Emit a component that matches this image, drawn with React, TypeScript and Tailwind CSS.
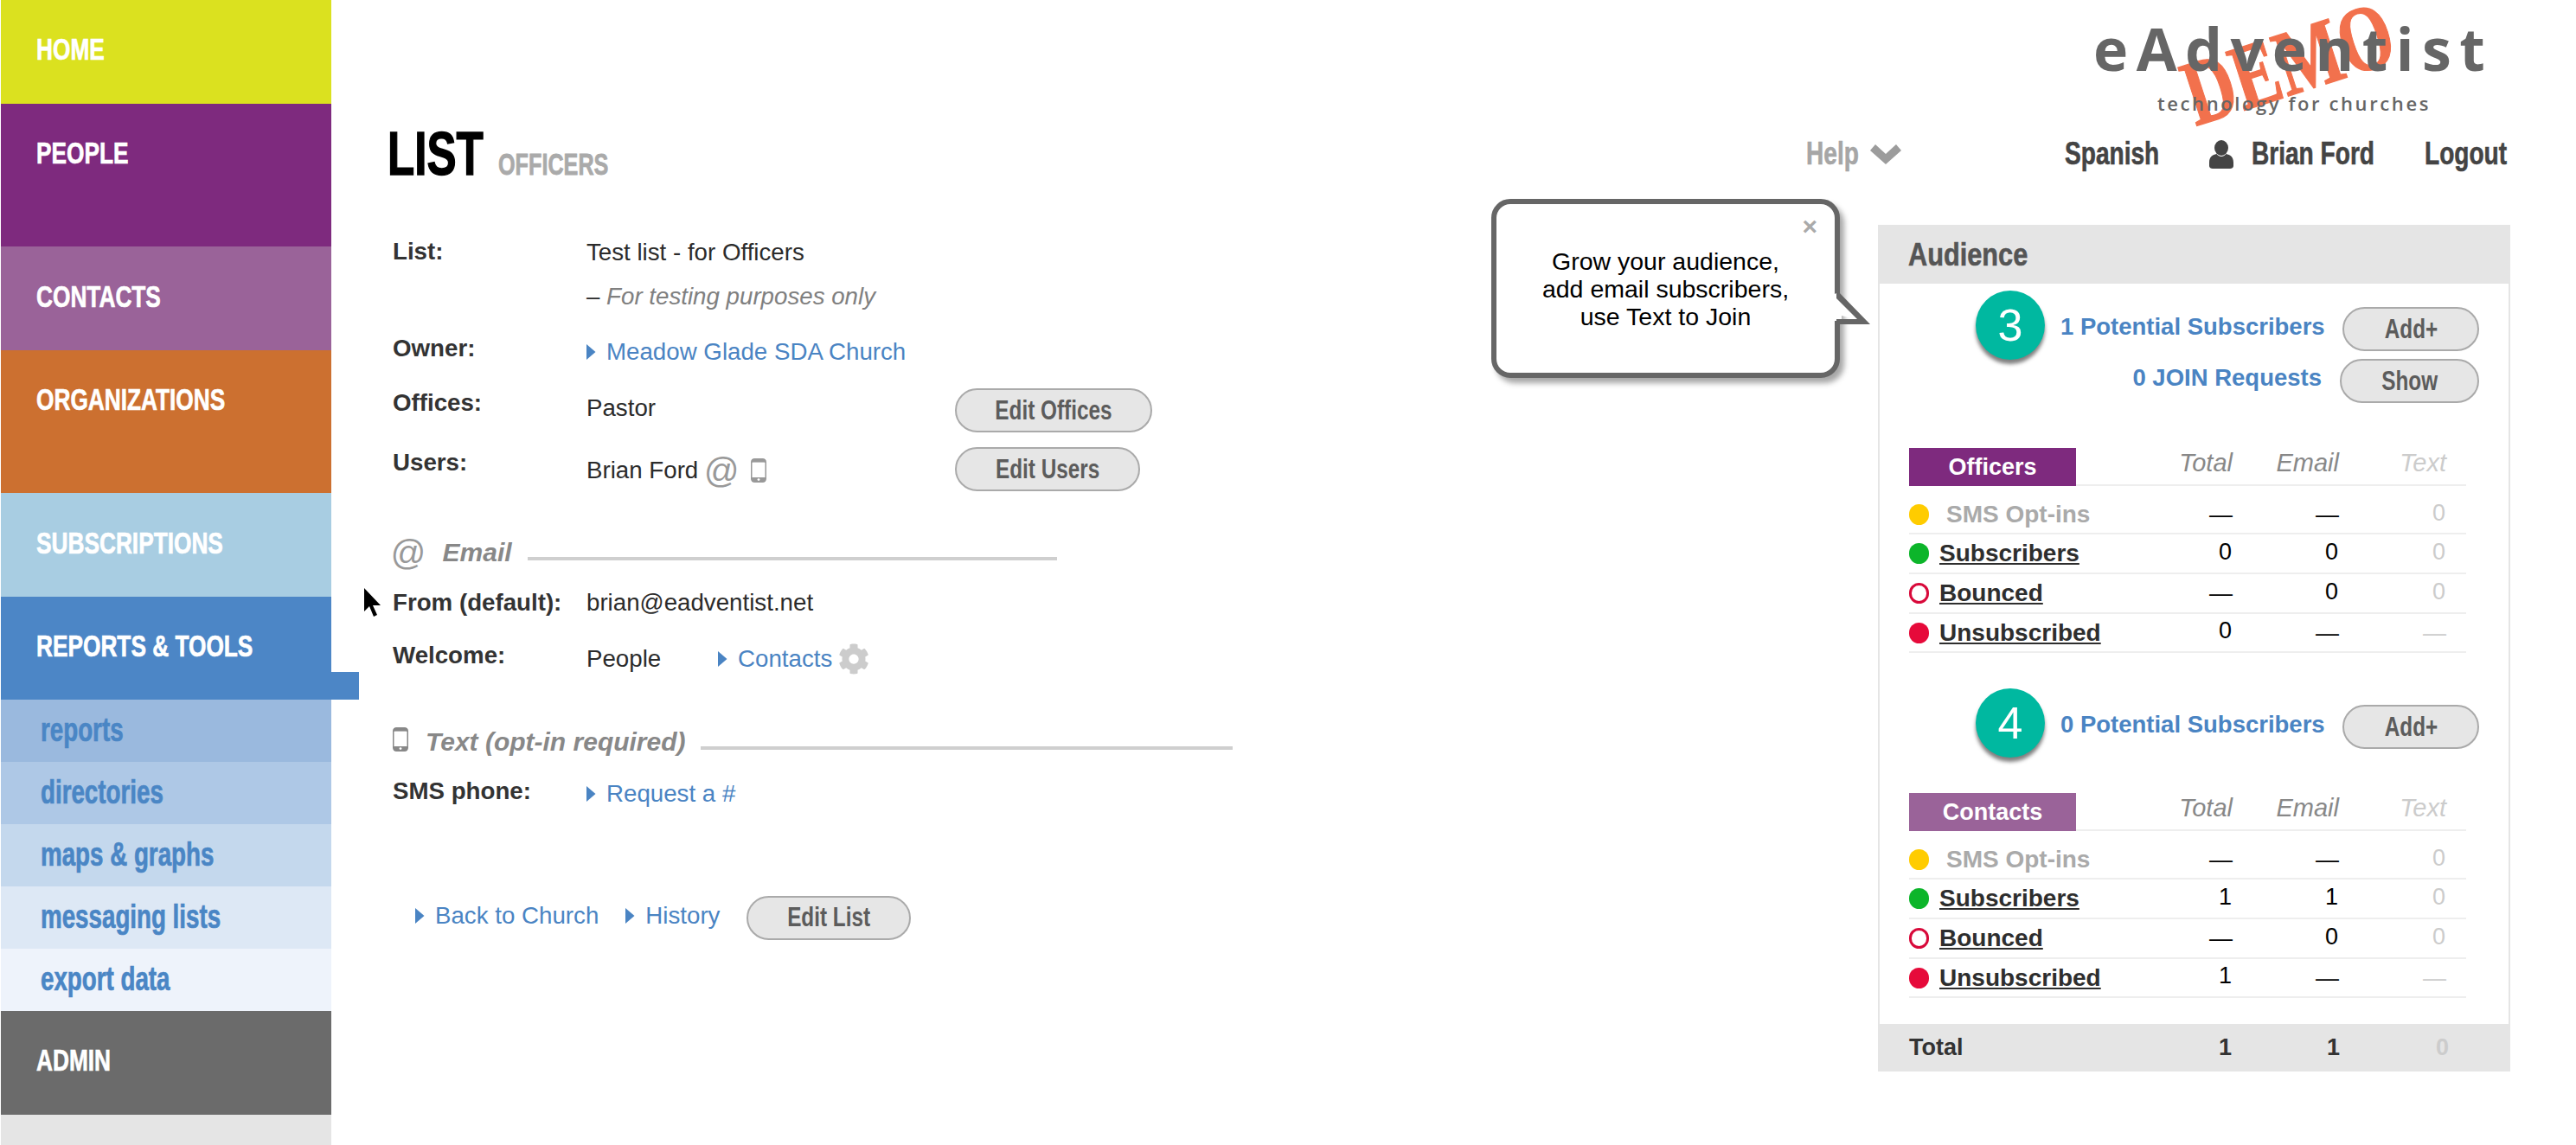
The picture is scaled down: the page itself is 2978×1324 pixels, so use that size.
import React from "react";
import { FaCog } from "react-icons/fa";

function Arrow() {
  return (
    <svg width="11" height="18" viewBox="0 0 11 18" className="shrink-0">
      <path d="M0 0 L10.5 9 L0 18 Z" fill="#4a84c3" />
    </svg>
  );
}

function LinkA({ children, className = "" }: { children: React.ReactNode; className?: string }) {
  return (
    <span className={`flex items-center gap-[12px] text-[#4a84c3] ${className}`}>
      <Arrow />
      <span>{children}</span>
    </span>
  );
}

function Phone({ w, h, color }: { w: number; h: number; color: string }) {
  return (
    <svg width={w} height={h} viewBox="0 0 18 28" fill="none">
      <rect x="1.2" y="1.2" width="15.6" height="25.6" rx="3" stroke={color} strokeWidth="2.4" />
      <rect x="1.5" y="4.5" width="15" height="18" fill="#fff" />
      <rect x="1.2" y="22" width="15.6" height="5" fill={color} />
      <rect x="1.2" y="1.2" width="15.6" height="3.4" fill={color} />
      <circle cx="9" cy="24.6" r="1.4" fill="#fff" />
    </svg>
  );
}

function Pill({ children, className = "" }: { children: React.ReactNode; className?: string }) {
  return (
    <span
      className={`flex h-[51px] items-center justify-center whitespace-nowrap rounded-full border-2 border-[#aaaaaa] bg-[#e6e6e6] text-[32px] font-bold leading-none text-[#5c5c5c] ${className}`}
    >
      <span className="inline-block -translate-y-px scale-x-[0.76]">{children}</span>
    </span>
  );
}

function Side({ label, className, pad }: { label: string; className: string; pad: string }) {
  return (
    <div className={`pl-[41px] text-[35px] font-bold leading-[32px] text-white ${className} ${pad}`}>
      <span className="inline-block origin-left scale-x-[0.75] whitespace-nowrap [-webkit-text-stroke:0.7px_#ffffff]">{label}</span>
    </div>
  );
}

function Sub({ label, className }: { label: string; className: string }) {
  return (
    <div className={`flex items-center pl-[46px] text-[38px] font-bold leading-none text-[#4a86c5] ${className}`}>
      <span className="inline-block origin-left -translate-y-[1px] scale-x-[0.73] whitespace-nowrap [-webkit-text-stroke:0.7px_#4a86c5]">{label}</span>
    </div>
  );
}

function Sidebar() {
  return (
    <aside className="ml-px flex h-[1324px] w-[382px] shrink-0 flex-col">
      <Side label="HOME" className="h-[120px] bg-[#dbe11f]" pad="pt-[41px]" />
      <Side label="PEOPLE" className="h-[165px] bg-[#7e2a7e]" pad="pt-[41px]" />
      <Side label="CONTACTS" className="h-[120px] bg-[#9a6399]" pad="pt-[42px]" />
      <Side label="ORGANIZATIONS" className="h-[165px] bg-[#cc7030]" pad="pt-[41px]" />
      <Side label="SUBSCRIPTIONS" className="h-[120px] bg-[#a8cde2]" pad="pt-[42px]" />
      <div className="relative">
        <Side label="REPORTS & TOOLS" className="h-[119px] bg-[#4c86c6]" pad="pt-[41px]" />
        <div className="absolute left-full top-[87px] h-[32px] w-[32px] bg-[#4c86c6]" />
      </div>
      <Sub label="reports" className="h-[72px] bg-[#9ab9de]" />
      <Sub label="directories" className="h-[72px] bg-[#aec8e6]" />
      <Sub label="maps & graphs" className="h-[72px] bg-[#c4d8ed]" />
      <Sub label="messaging lists" className="h-[72px] bg-[#dde8f5]" />
      <Sub label="export data" className="h-[72px] bg-[#eef3fb]" />
      <Side label="ADMIN" className="h-[120px] bg-[#6b6b6b]" pad="pt-[41px]" />
      <div className="flex-1 bg-[#e5e5e5]" />
    </aside>
  );
}

function Label({ children }: { children: React.ReactNode }) {
  return <div className="w-[224px] shrink-0 font-bold text-[#333333]">{children}</div>;
}

function SectionHead({
  icon,
  title,
  line,
  height,
}: {
  icon: React.ReactNode;
  title: string;
  line: string;
  height: string;
}) {
  return (
    <div className={`flex items-start ${height}`}>
      {icon}
      <span className="text-[30px] font-bold italic leading-[36px] text-[#888888]">{title}</span>
      <span className={`mt-[23px] h-[4px] bg-[#cfcfcf] ${line}`} />
    </div>
  );
}

function Details() {
  return (
    <div className="w-[1341px] shrink-0 pl-[71px] pt-[45px] text-[27.7px] leading-[32px] text-[#2b2b2b]">
      <div className="flex h-[52px] items-start">
        <Label>List:</Label>
        <span className="mt-px">Test list - for Officers</span>
      </div>
      <div className="flex h-[60px] items-start">
        <Label> </Label>
        <span className="text-[#808080]">
          <span className="text-[#2b2b2b]">– </span>
          <i>For testing purposes only</i>
        </span>
      </div>
      <div className="flex h-[62px] items-start">
        <Label>Owner:</Label>
        <LinkA className="mt-1">Meadow Glade SDA Church</LinkA>
      </div>
      <div className="flex h-[68px] items-start">
        <div className="w-[224px] shrink-0 pt-px font-bold text-[#333333]">Offices:</div>
        <span className="mt-[7px] w-[426px] shrink-0">Pastor</span>
        <Pill className="w-[228px]">Edit Offices</Pill>
      </div>
      <div className="flex h-[104px] items-start">
        <div className="w-[224px] shrink-0 pt-[2px] font-bold text-[#333333]">Users:</div>
        <span className="mt-[7px] flex w-[426px] shrink-0 items-center">
          Brian Ford
          <span className="ml-[6px] text-[40px] italic leading-none text-[#999999]">@</span>
          <span className="ml-[14px] flex">
            <Phone w={18} h={28} color="#999999" />
          </span>
        </span>
        <Pill className="w-[214px]">Edit Users</Pill>
      </div>
      <SectionHead
        height="h-[60px]"
        title="Email"
        line="ml-[18px] w-[612px]"
        icon={<span className="-ml-[3px] mr-[20px] text-[40px] italic leading-[36px] text-[#999999]">@</span>}
      />
      <div className="flex h-[60px] items-start">
        <Label>From (default):</Label>
        <span>brian@eadventist.net</span>
      </div>
      <div className="flex h-[99px] items-start">
        <div className="w-[224px] shrink-0 pt-px font-bold text-[#333333]">Welcome:</div>
        <span className="mt-[5px] w-[152px] shrink-0">People</span>
        <LinkA className="mt-[5px]">Contacts</LinkA>
        <FaCog className="ml-[7px] mt-[3px] text-[36px] text-[#cccccc]" />
      </div>
      <SectionHead
        height="h-[59px]"
        title="Text (opt-in required)"
        line="ml-[17px] w-[615px]"
        icon={
          <span className="mr-[20px] flex pt-[1px]">
            <Phone w={18} h={28} color="#888888" />
          </span>
        }
      />
      <div className="flex h-[137px] items-start">
        <div className="w-[224px] shrink-0 font-bold text-[#333333]">SMS phone:</div>
        <LinkA className="mt-[3px]">Request a #</LinkA>
      </div>
      <div className="flex h-[50px] items-center pl-[26px]">
        <LinkA className="-mt-1">Back to Church</LinkA>
        <LinkA className="-mt-1 ml-[31px]">History</LinkA>
        <Pill className="ml-[31px] w-[190px]">Edit List</Pill>
      </div>
    </div>
  );
}

function Callout() {
  return (
    <div className="w-[447px] shrink-0">
      <div className="relative h-[207px] w-[403px] rounded-[22px] border-[6px] border-[#666666] bg-white pt-[50px] text-center text-[28.5px] leading-[32px] text-black shadow-[5px_6px_6px_rgba(0,0,0,0.35)]">
        <span className="absolute right-[20px] top-[10px] text-[30px] font-bold leading-[32px] text-[#aaaaaa]">×</span>
        <div>Grow your audience,</div>
        <div>add email subscribers,</div>
        <div>use Text to Join</div>
        <svg className="absolute left-[391px] top-[96px]" width="46" height="44" viewBox="0 0 46 44">
          <path d="M0 8 L0 39 L8 39 L8 33 L33 39 L2 7 Z" fill="#ffffff" />
          <path d="M2 3 L41 43 L2 43 L2 37 L26 37 L2 13 Z" fill="#666666" />
        </svg>
      </div>
    </div>
  );
}

type Row = { name: string; dot: "y" | "g" | "o" | "r"; link: boolean; t: string; e: string; x: string };

function Num({ v, muted = false }: { v: string; muted?: boolean }) {
  const dash = v === "—";
  return (
    <span
      className={`text-right text-[27px] leading-[30px] ${muted ? "text-[#cccccc]" : "text-black"} ${
        dash ? "" : "-mt-[5px] pr-px"
      }`}
    >
      {v}
    </span>
  );
}

const DOTS: Record<Row["dot"], string> = {
  y: "bg-[#ffcc00]",
  g: "bg-[#0cb52a]",
  o: "border-[3px] border-[#d8093a] bg-white",
  r: "bg-[#e60a3a]",
};

const HEIGHTS = ["h-[56px] pt-[12px]", "h-[46px]", "h-[46px]", "h-[45px]"];

function StatTable({ title, tab, rows }: { title: string; tab: string; rows: Row[] }) {
  return (
    <div className="ml-[34px] w-[644px]">
      <div className="grid h-[44px] grid-cols-[250px_124px_123px_124px_23px] border-b-2 border-[#eeeeee] text-[29px] italic leading-[32px] text-[#888888]">
        <div className={`-mb-[2px] flex h-[44px] w-[193px] items-center justify-center text-[27px] font-bold not-italic text-white ${tab}`}>
          {title}
        </div>
        <span className="pt-[1px] text-right">Total</span>
        <span className="pt-[1px] text-right">Email</span>
        <span className="pt-[1px] text-right text-[#cccccc]">Text</span>
      </div>
      {rows.map((r, i) => (
        <div
          key={r.name}
          className={`grid grid-cols-[250px_124px_123px_124px_23px] items-center border-b-2 border-[#eeeeee] ${HEIGHTS[i]}`}
        >
          <div className="flex items-center">
            <span className={`h-[24px] w-[23px] shrink-0 rounded-full ${DOTS[r.dot]}`} />
            {r.link ? (
              <span className="ml-[12px] whitespace-nowrap text-[28px] font-bold leading-[32px] text-[#2e2e2e] underline decoration-2 underline-offset-2">
                {r.name}
              </span>
            ) : (
              <span className="ml-[20px] whitespace-nowrap text-[28px] font-bold leading-[32px] text-[#aaaaaa]">{r.name}</span>
            )}
          </div>
          <Num v={r.t} />
          <Num v={r.e} />
          <Num v={r.x} muted />
        </div>
      ))}
    </div>
  );
}

function Badge({ n }: { n: string }) {
  return (
    <span className="flex h-[80px] w-[80px] shrink-0 items-center justify-center rounded-full bg-[#00b8a0] text-[52px] leading-none text-white shadow-[0_5px_4px_rgba(0,0,0,0.5)]">
      {n}
    </span>
  );
}

function PotentialRow({ n, label }: { n: string; label: string }) {
  return (
    <div className="ml-[111px] flex h-[79px] items-start">
      <Badge n={n} />
      <span className="ml-[18px] mt-[26px] w-[326px] shrink-0 whitespace-nowrap text-[27.5px] font-bold leading-[32px] text-[#4a84c3]">
        {label}
      </span>
      <Pill className="mt-[19px] w-[158px]">Add+</Pill>
    </div>
  );
}

function Panel() {
  return (
    <div className="mt-[30px] w-[731px] shrink-0">
      <div className="flex h-[68px] items-center bg-[#e5e5e5] pl-[35px] text-[37px] font-bold leading-none text-[#555555]">
        <span className="inline-block origin-left scale-x-[0.83] [-webkit-text-stroke:0.6px_#555555]">Audience</span>
      </div>
      <div className="h-[856px] border-x-2 border-[#e5e5e5] pt-[8px]">
        <PotentialRow n="3" label="1 Potential Subscribers" />
        <div className="mb-[52px] flex h-[51px] items-start justify-end pr-[34px]">
          <span className="mr-[21px] mt-[6px] whitespace-nowrap text-[27.5px] font-bold leading-[32px] text-[#4a84c3]">0 JOIN Requests</span>
          <Pill className="w-[161px]">Show</Pill>
        </div>
        <StatTable
          title="Officers"
          tab="bg-[#7e2a7e]"
          rows={[
            { name: "SMS Opt-ins", dot: "y", link: false, t: "—", e: "—", x: "0" },
            { name: "Subscribers", dot: "g", link: true, t: "0", e: "0", x: "0" },
            { name: "Bounced", dot: "o", link: true, t: "—", e: "0", x: "0" },
            { name: "Unsubscribed", dot: "r", link: true, t: "0", e: "—", x: "—" },
          ]}
        />
        <div className="mt-[41px]">
          <PotentialRow n="4" label="0 Potential Subscribers" />
        </div>
        <div className="mt-[42px]">
          <StatTable
            title="Contacts"
            tab="bg-[#9a6399]"
            rows={[
              { name: "SMS Opt-ins", dot: "y", link: false, t: "—", e: "—", x: "0" },
              { name: "Subscribers", dot: "g", link: true, t: "1", e: "1", x: "0" },
              { name: "Bounced", dot: "o", link: true, t: "—", e: "0", x: "0" },
              { name: "Unsubscribed", dot: "r", link: true, t: "1", e: "—", x: "—" },
            ]}
          />
        </div>
      </div>
      <div className="grid h-[55px] grid-cols-[249px_124px_125px_126px] items-center bg-[#e5e5e5] pl-[36px] text-[27px] font-bold text-[#333333]">
        <span>Total</span>
        <span className="text-right">1</span>
        <span className="text-right">1</span>
        <span className="text-right text-[#cccccc]">0</span>
      </div>
    </div>
  );
}

function Logo() {
  return (
    <div className="relative mr-[102px] h-[130px] w-[460px] font-['Open_Sans',sans-serif] text-[#666666]">
      <span className="absolute left-[105px] top-[34px] origin-center -rotate-[18deg] scale-y-[1.35] font-['Liberation_Serif',serif] text-[80px] font-bold leading-[78px] text-[#f2714d] [-webkit-text-stroke:1px_#f2714d]">
        DEMO
      </span>
      <div className="relative pl-[4px] pt-[16px] text-[68px] font-bold leading-[80px] tracking-[9.5px]">eAdventist</div>
      <div className="relative pl-[78px] pt-[11px] text-[22px] font-semibold leading-[24px] tracking-[2.6px]">technology for churches</div>
    </div>
  );
}

function NavText({ children }: { children: React.ReactNode }) {
  return (
    <span className="inline-block origin-left scale-x-[0.78] whitespace-nowrap [-webkit-text-stroke:0.6px]">{children}</span>
  );
}

function Nav() {
  return (
    <div className="mr-[78px] flex w-[812px] items-center pt-[28px] text-[36px] font-bold leading-[40px] text-[#444444]">
      <span className="w-[74px] shrink-0 text-[#a6a6a6]">
        <NavText>Help</NavText>
      </span>
      <span className="w-[225px] shrink-0">
        <svg width="36" height="23" viewBox="0 0 36 23" className="block">
          <path d="M0 7 L6 0 L18 11 L30 0 L36 7 L18 23 Z" fill="#9c9c9c" />
        </svg>
      </span>
      <span className="w-[167px] shrink-0">
        <NavText>Spanish</NavText>
      </span>
      <span className="w-[49px] shrink-0">
        <svg width="28" height="33" viewBox="0 0 28 33" className="block">
          <ellipse cx="14" cy="9" rx="8" ry="9" fill="#444444" />
          <path d="M0 26 C0 19 4 17 8.5 16 C10 18 12 19 14 19 C16 19 18 18 19.5 16 C24 17 28 19 28 26 L28 30 C28 32 26 33 24 33 L4 33 C2 33 0 32 0 30 Z" fill="#444444" />
        </svg>
      </span>
      <span className="w-[200px] shrink-0">
        <NavText>Brian Ford</NavText>
      </span>
      <span className="w-[97px] shrink-0">
        <NavText>Logout</NavText>
      </span>
    </div>
  );
}

export default function App() {
  return (
    <div className="flex h-[1324px] w-[2978px] overflow-hidden bg-white font-['Liberation_Sans',sans-serif]">
      <Sidebar />
      <main className="relative flex min-w-0 flex-1 flex-col">
        <svg className="absolute left-[38px] top-[680px]" width="21" height="33" viewBox="0 0 21 33">
          <path d="M0 0 L0 27 L6 21 L11 33 L15 31 L10 20 L19 20 Z" fill="#000" />
        </svg>
        <div className="flex h-[130px] justify-end">
          <Logo />
        </div>
        <div className="flex h-[100px] items-start justify-between">
          <div className="ml-[65px] mt-[13px] flex items-baseline">
            <span className="inline-block w-[128px] origin-left scale-x-[0.73] text-[70px] font-bold leading-[70px] text-black [-webkit-text-stroke:1.5px_#000000]">LIST</span>
            <span className="inline-block origin-left scale-x-[0.72] text-[35px] font-bold text-[#aaaaaa] [-webkit-text-stroke:0.8px_#aaaaaa]">OFFICERS</span>
          </div>
          <Nav />
        </div>
        <div className="flex items-start">
          <Details />
          <Callout />
          <Panel />
        </div>
      </main>
    </div>
  );
}
